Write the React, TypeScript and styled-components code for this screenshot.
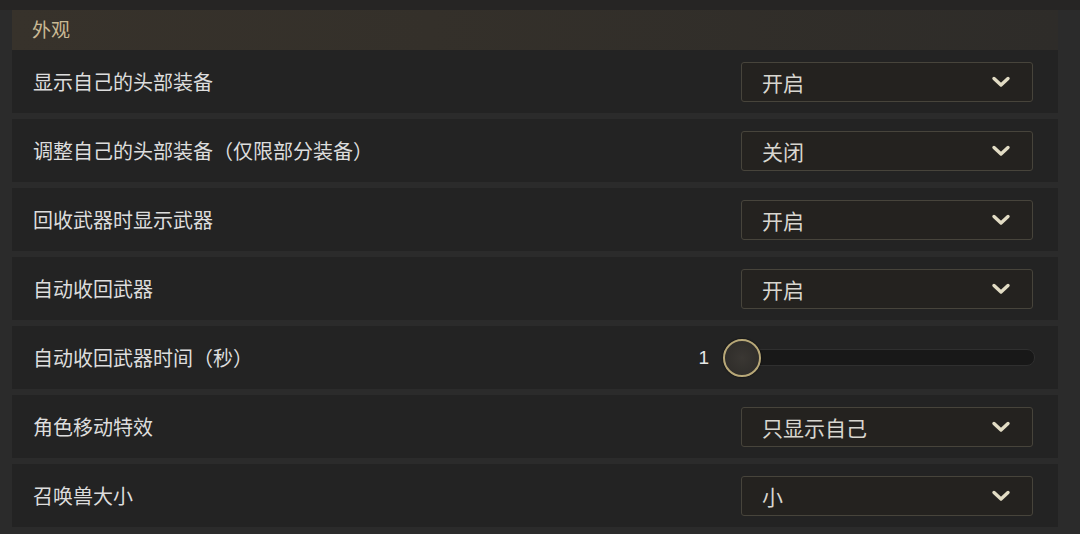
import React from 'react'
import styled, { createGlobalStyle } from 'styled-components'

const Global = createGlobalStyle`
  html, body { margin: 0; padding: 0; background: #2b2b2b; }
  body { font-family: "Noto Sans CJK SC", "Noto Sans", sans-serif; }
`

const Page = styled.div`
  width: 1080px;
  height: 534px;
  overflow: hidden;
  background: #2b2b2b;
  display: flex;
  flex-direction: column;
`

const TopStrip = styled.div`
  height: 10px;
  background: #262524;
`

const Panel = styled.div`
  margin: 0 22px 0 12px;
  display: flex;
  flex-direction: column;
  gap: 6px;
`

const Header = styled.div`
  height: 40px;
  box-sizing: border-box;
  display: flex;
  align-items: center;
  padding: 0 0 4px 20px;
  margin-bottom: -6px;
  background: linear-gradient(90deg, #37322b 0%, #34302a 40%, #2e2c29 100%);
  color: #c9b994;
  font-size: 19px;
`

const Row = styled.div`
  height: 63px;
  display: flex;
  align-items: center;
  justify-content: space-between;
  padding: 0 25px 0 21px;
  background: #232323;
  color: #dddddd;
  font-size: 20px;
`

const Select = styled.div`
  width: 292px;
  height: 40px;
  box-sizing: border-box;
  border: 1px solid #47443b;
  border-radius: 3px;
  background: #24221f;
  display: flex;
  align-items: center;
  justify-content: space-between;
  padding: 0 20px 0 20px;
  color: #d8d6cf;
  font-size: 21px;
`

const SliderWrap = styled.div`
  display: flex;
  align-items: center;
  gap: 32px;
  margin-right: -2px;
`

const Value = styled.span`
  color: #e6e6e6;
  font-family: "Liberation Sans", sans-serif;
  font-size: 19px;
`

const Track = styled.div`
  position: relative;
  width: 292px;
  height: 15px;
  border-radius: 8px;
  background: #181818;
  border: 1px solid #2f2f2f;
  display: flex;
  align-items: center;
`

const Knob = styled.div`
  position: absolute;
  left: -19px;
  top: 50%;
  width: 34px;
  height: 34px;
  margin-top: -19px;
  border-radius: 50%;
  border: 2px solid #b8a878;
  background: radial-gradient(circle, #3a3733 0%, #2c2a27 100%);
  box-shadow: 0 0 2px #000;
`

const Chevron = () => (
  <svg width="22" height="14" viewBox="0 0 22 14">
    <path d="M4 3.5 L11 10 L18 3.5" fill="none" stroke="#e2dcc4" strokeWidth="3.4" strokeLinecap="round" strokeLinejoin="round" />
  </svg>
)

const rows: { label: string; value?: string; slider?: number }[] = [
  { label: '显示自己的头部装备', value: '开启' },
  { label: '调整自己的头部装备（仅限部分装备）', value: '关闭' },
  { label: '回收武器时显示武器', value: '开启' },
  { label: '自动收回武器', value: '开启' },
  { label: '自动收回武器时间（秒）', slider: 1 },
  { label: '角色移动特效', value: '只显示自己' },
  { label: '召唤兽大小', value: '小' },
]

export default function App() {
  return (
    <Page>
      <Global />
      <TopStrip />
      <Panel>
        <Header>外观</Header>
        {rows.map(r => (
          <Row key={r.label}>
            <span>{r.label}</span>
            {r.slider !== undefined ? (
              <SliderWrap>
                <Value>{r.slider}</Value>
                <Track>
                  <Knob />
                </Track>
              </SliderWrap>
            ) : (
              <Select>
                <span>{r.value}</span>
                <Chevron />
              </Select>
            )}
          </Row>
        ))}
      </Panel>
    </Page>
  )
}
